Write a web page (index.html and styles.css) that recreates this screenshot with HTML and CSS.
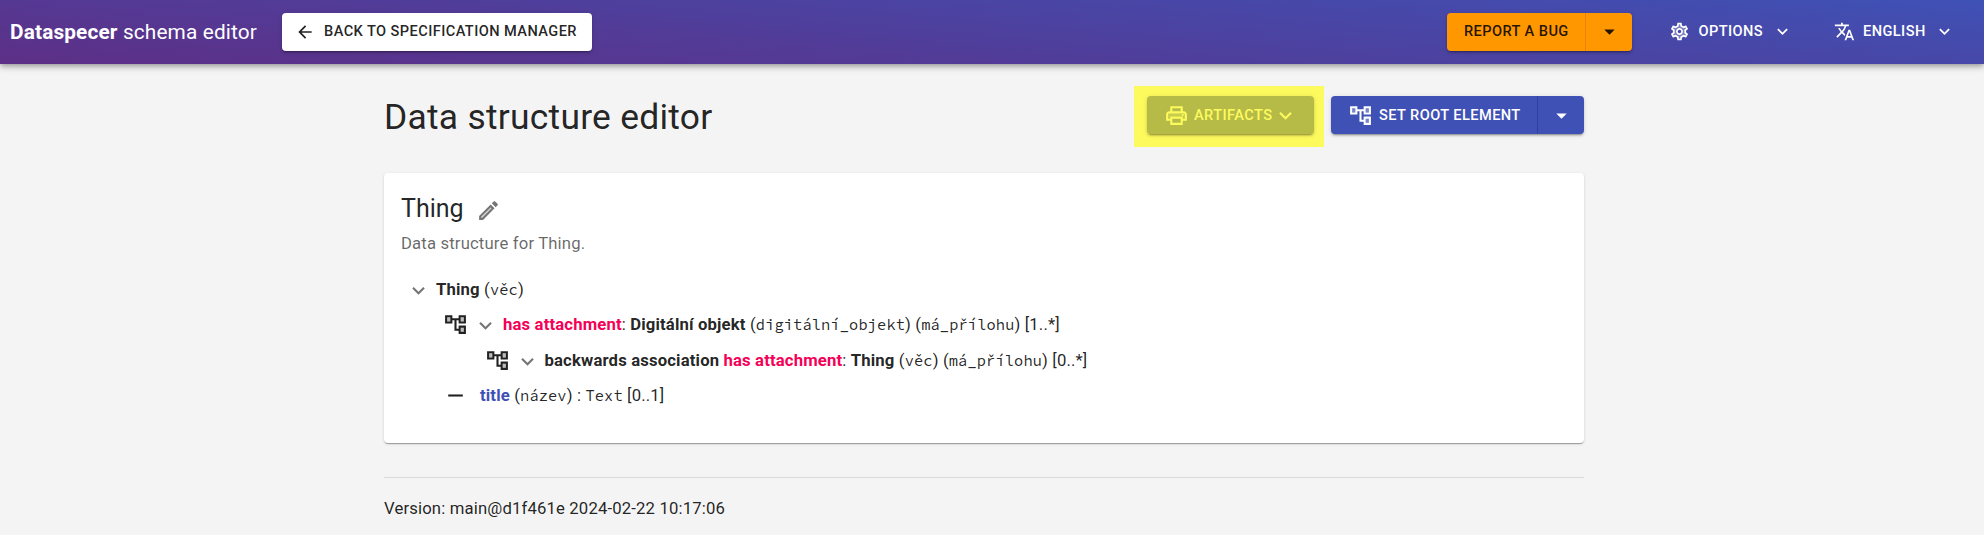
FILE: index.html
```html
<!DOCTYPE html>
<html lang="en">
<head>
<meta charset="utf-8">
<title>Dataspecer schema editor</title>
<link rel="stylesheet" href="styles.css">
</head>
<body>
<svg class="sprite" aria-hidden="true">
  <symbol id="chevron" viewBox="0 0 24 24"><path d="M7.41 8.59 12 13.17l4.59-4.58L18 10l-6 6-6-6 1.41-1.41z"/></symbol>
  <symbol id="caret" viewBox="0 0 24 24"><path d="m7 10 5 5 5-5z"/></symbol>
  <symbol id="tree" viewBox="0 0 24 24"><path opacity=".3" d="M7 9H4V5h3v4zm10 6h3v4h-3v-4zm0-10h3v4h-3V5z"/><path d="M22 11V3h-7v3H9V3H2v8h7V8h2v10h4v3h7v-8h-7v3h-2V8h2v3h7zM7 9H4V5h3v4zm10 6h3v4h-3v-4zm0-10h3v4h-3V5z"/></symbol>
  <symbol id="print" viewBox="0 0 24 24"><path opacity=".3" d="M19 10H5c-.55 0-1 .45-1 1v4h2v-2h12v2h2v-4c0-.55-.45-1-1-1z"/><path d="M19 8h-1V3H6v5H5c-1.66 0-3 1.34-3 3v6h4v4h12v-4h4v-6c0-1.66-1.34-3-3-3zM8 5h8v3H8V5zm8 14H8v-4h8v4zm4-4h-2v-2H6v2H4v-4c0-.55.45-1 1-1h14c.55 0 1 .45 1 1v4z"/><circle cx="18" cy="11.5" r="1"/></symbol>
  <symbol id="edit" viewBox="0 0 24 24"><path opacity=".3" d="M5 18.08V19h.92l9.06-9.06-.92-.92z"/><path d="M20.71 7.04c.39-.39.39-1.02 0-1.41l-2.34-2.34c-.2-.2-.45-.29-.71-.29s-.51.1-.7.29l-1.83 1.83 3.75 3.75 1.83-1.83zM3 17.25V21h3.75L17.81 9.94l-3.75-3.75L3 17.25zM5.92 19H5v-.92l9.06-9.06.92.92L5.92 19z"/></symbol>
  <symbol id="back" viewBox="0 0 24 24"><path d="M20 11H7.83l5.59-5.59L12 4l-8 8 8 8 1.41-1.41L7.83 13H20v-2z"/></symbol>
  <symbol id="minus" viewBox="0 0 24 24"><path d="M19 13H5v-2h14v2z"/></symbol>
  <symbol id="translate" viewBox="0 0 24 24"><path d="m12.87 15.07-2.54-2.51.03-.03c1.74-1.94 2.98-4.17 3.71-6.53H17V4h-7V2H8v2H1v1.99h11.17C11.5 7.92 10.44 9.75 9 11.35 8.07 10.32 7.3 9.19 6.69 8h-2c.73 1.63 1.73 3.17 2.98 4.56l-5.09 5.02L4 19l5-5 3.11 3.11.76-2.04zM18.5 10h-2L12 22h2l1.12-3h4.75L21 22h2l-4.5-12zm-2.62 7 1.62-4.33L19.12 17h-3.24z"/></symbol>
  <symbol id="gear" viewBox="0 0 24 24"><path opacity=".3" d="M19.28 8.6l-.7-1.21-1.27.51-1.06.43-.91-.7c-.39-.3-.8-.54-1.23-.71l-1.06-.43-.16-1.13L12.7 4h-1.4l-.19 1.35-.16 1.13-1.06.44c-.41.17-.82.41-1.25.73l-.9.68-1.05-.42-1.27-.52-.7 1.21 1.08.84.89.7-.14 1.13c-.03.3-.05.53-.05.73s.02.43.05.73l.14 1.13-.89.7-1.08.84.7 1.21 1.27-.51 1.06-.43.91.7c.39.3.8.54 1.23.71l1.06.43.16 1.13.19 1.36h1.39l.19-1.35.16-1.13 1.06-.43c.41-.17.82-.41 1.25-.73l.9-.68 1.04.42 1.27.51.7-1.21-1.08-.84-.89-.7.14-1.13c.04-.31.05-.52.05-.73s-.02-.43-.05-.73l-.14-1.13.89-.7 1.1-.84zM12 16c-2.21 0-4-1.79-4-4s1.79-4 4-4 4 1.79 4 4-1.79 4-4 4z"/><path d="M19.43 12.98c.04-.32.07-.64.07-.98 0-.34-.03-.66-.07-.98l2.11-1.65c.19-.15.24-.42.12-.64l-2-3.46c-.09-.16-.26-.25-.44-.25-.06 0-.12.01-.17.03l-2.49 1c-.52-.4-1.08-.73-1.69-.98l-.38-2.65C14.46 2.18 14.25 2 14 2h-4c-.25 0-.46.18-.49.42l-.38 2.65c-.61.25-1.17.59-1.69.98l-2.49-1c-.06-.02-.12-.03-.18-.03-.17 0-.34.09-.43.25l-2 3.46c-.13.22-.07.49.12.64l2.11 1.65c-.04.32-.07.65-.07.98 0 .33.03.66.07.98l-2.11 1.65c-.19.15-.24.42-.12.64l2 3.46c.09.16.26.25.44.25.06 0 .12-.01.17-.03l2.49-1c.52.4 1.08.73 1.69.98l.38 2.65c.03.24.24.42.49.42h4c.25 0 .46-.18.49-.42l.38-2.65c.61-.25 1.17-.59 1.69-.98l2.49 1c.06.02.12.03.18.03.17 0 .34-.09.43-.25l2-3.46c.12-.22.07-.49-.12-.64l-2.11-1.65zm-1.98-1.71c.04.31.05.52.05.73 0 .21-.02.43-.05.73l-.14 1.13.89.7 1.08.84-.7 1.21-1.27-.51-1.04-.42-.9.68c-.43.32-.84.56-1.25.73l-1.06.43-.16 1.13-.2 1.35h-1.4l-.19-1.35-.16-1.13-1.06-.43c-.43-.18-.83-.41-1.23-.71l-.91-.7-1.06.43-1.27.51-.7-1.21 1.08-.84.89-.7-.14-1.13c-.03-.31-.05-.54-.05-.74s.02-.43.05-.73l.14-1.13-.89-.7-1.08-.84.7-1.21 1.27.51 1.04.42.9-.68c.43-.32.84-.56 1.25-.73l1.06-.43.16-1.13.2-1.35h1.39l.19 1.35.16 1.13 1.06.43c.43.18.83.41 1.23.71l.91.7 1.06-.43 1.27-.51.7 1.21-1.07.85-.89.7.14 1.13zM12 8c-2.21 0-4 1.79-4 4s1.79 4 4 4 4-1.79 4-4-1.79-4-4-4zm0 6c-1.1 0-2-.9-2-2s.9-2 2-2 2 .9 2 2-.9 2-2 2z"/></symbol>
</svg>

<header class="appbar">
  <div class="brand"><strong>Dataspecer</strong> schema editor</div>
  <button class="btn btn-back"><svg class="icon small"><use href="#back"/></svg>Back to specification manager</button>
  <div class="spacer"></div>
  <div class="group group-bug">
    <button class="btn bug-main">Report a bug</button>
    <button class="btn bug-more"><svg class="icon large"><use href="#caret"/></svg></button>
  </div>
  <button class="btn btn-text options"><svg class="icon medium"><use href="#gear"/></svg><span>Options</span><svg class="icon chevron"><use href="#chevron"/></svg></button>
  <button class="btn btn-text language"><svg class="icon medium"><use href="#translate"/></svg><span>English</span><svg class="icon chevron"><use href="#chevron"/></svg></button>
</header>

<main class="container">
  <div class="titlebar">
    <h1>Data structure editor</h1>
    <div class="highlight">
      <button class="btn artifacts"><svg class="icon large"><use href="#print"/></svg><span>Artifacts</span><svg class="icon large"><use href="#chevron"/></svg></button>
    </div>
    <div class="group group-root">
      <button class="btn root-main"><svg class="icon large"><use href="#tree"/></svg>Set root element</button>
      <button class="btn root-more"><svg class="icon large"><use href="#caret"/></svg></button>
    </div>
  </div>

  <section class="card">
    <div class="card-title"><h2>Thing</h2><svg class="icon edit"><use href="#edit"/></svg></div>
    <p class="description">Data structure for Thing.</p>
    <ul class="tree">
      <li class="row level0"><svg class="icon large toggle"><use href="#chevron"/></svg><span><b>Thing</b> (<code>věc</code>)</span></li>
      <li class="row level1"><svg class="icon large"><use href="#tree"/></svg><svg class="icon large toggle"><use href="#chevron"/></svg><span><b class="association">has attachment</b>: <b>Digitální objekt</b> (<code>digitální_objekt</code>) (<code>má_přílohu</code>) [1..*]</span></li>
      <li class="row level2"><svg class="icon large"><use href="#tree"/></svg><svg class="icon large toggle"><use href="#chevron"/></svg><span><b>backwards association <span class="association">has attachment</span></b>: <b>Thing</b> (<code>věc</code>) (<code>má_přílohu</code>) [0..*]</span></li>
      <li class="row level1 leaf"><svg class="icon large"><use href="#minus"/></svg><span><b class="attribute">title</b> (<code>název</code>) : <code>Text</code> [0..1]</span></li>
    </ul>
  </section>
  <footer class="footer">Version: main@d1f461e 2024-02-22 10:17:06</footer>
</main>
</body>
</html>
```
FILE: styles.css
```css
* { box-sizing: border-box; }
body {
  margin: 0;
  min-height: 535px;
  background: #f4f4f4;
  color: rgba(0, 0, 0, .87);
  font: 400 16.7px/25px Roboto, "Noto Sans", sans-serif;
  letter-spacing: .15px;
}
.sprite { display: none; }
.icon { fill: currentColor; flex: none; display: block; }
.small { width: 20px; height: 20px; }
.medium { width: 21px; height: 21px; }
.large { width: 25px; height: 25px; }
.chevron { width: 21px; height: 21px; }

.appbar {
  display: flex;
  align-items: flex-start;
  height: 64px;
  padding: 12.5px 26px 0 10px;
  color: #fff;
  background: linear-gradient(5deg, #5d2f86 0%, #3f51b5 100%);
  box-shadow: 0 2px 4px -1px rgba(0,0,0,.2), 0 4px 5px rgba(0,0,0,.14), 0 1px 10px rgba(0,0,0,.12);
}
.brand { width: 272px; font-size: 20.8px; line-height: 38px; white-space: nowrap; }
.brand strong { font-weight: 700; }
.spacer { flex: 1; }
.btn {
  display: flex;
  align-items: center;
  height: 38px;
  padding: 0;
  border: 0;
  border-radius: 4px;
  background: none;
  color: inherit;
  font: 500 14.6px/25px Roboto, sans-serif;
  letter-spacing: .42px;
  text-align: left;
  text-transform: uppercase;
  white-space: nowrap;
}
.btn-back, .artifacts, .group {
  box-shadow: 0 3px 1px -2px rgba(0,0,0,.2), 0 2px 2px rgba(0,0,0,.14), 0 1px 5px rgba(0,0,0,.12);
}
.btn-back { width: 310px; padding-left: 13px; gap: 9px; background: #fff; color: rgba(0,0,0,.87); }
.group { display: flex; flex: none; border-radius: 4px; overflow: hidden; }
.group .btn { border-radius: 0; }
.group-bug { width: 185px; background: #ff9800; color: rgba(0,0,0,.87); }
.group .bug-main { width: 139px; padding-left: 17px; border-right: 1px solid #e98208; }
.bug-more { flex: 1; justify-content: center; }
.options { margin-left: 37px; width: 165px; }
.options .medium { margin-right: 8.5px; }
.options span { width: 73px; }
.language { width: 124px; }
.language .medium { margin-right: 8px; }
.language span { width: 71px; }

.container { width: 1200px; margin-left: 384px; }
.titlebar { display: flex; align-items: flex-start; padding-top: 23px; height: 109px; }
h1 { flex: 1; margin: 7px 0 0; font-size: 35.4px; line-height: 46px; font-weight: 400; letter-spacing: .26px; }
.highlight { width: 190px; height: 61px; margin-top: -1px; padding: 10px 10px 0 13px; background: #fdfa5e; }
.artifacts { width: 167px; padding-left: 17px; background: #b5bb46; color: #fdfa5e; }
.artifacts span { width: 79px; margin-left: 5px; }
.group-root { width: 253px; margin: 9px 0 0 7px; background: #3f51b5; color: #fff; }
.group .root-main { width: 207px; padding-left: 17px; gap: 6px; border-right: 1px solid #303f9f; }
.root-more { flex: 1; justify-content: center; }

.card {
  height: 270px;
  padding: 17px 17px;
  border-radius: 4px;
  background: #fff;
  box-shadow: 0 2px 1px -1px rgba(0,0,0,.2), 0 1px 1px rgba(0,0,0,.14), 0 1px 3px rgba(0,0,0,.12);
}
.card-title { display: flex; height: 38px; gap: 12px; }
h2 { margin: 0; font-size: 25px; line-height: 38px; font-weight: 400; letter-spacing: 0; }
.edit { width: 25px; height: 25px; margin-top: 8px; color: rgba(0,0,0,.54); }
.description { margin: 3px 0 16px; color: rgba(0,0,0,.6); }
.tree { list-style: none; margin: 0; padding: 0; }
.row { display: flex; align-items: center; height: 35.3px; white-space: nowrap; gap: 5px; }
.level0 { padding-left: 5px; }
.level1 { padding-left: 42px; }
.level2 { padding-left: 83.5px; }
.leaf { gap: 12px; }
.toggle { position: relative; top: 1px; color: rgba(0,0,0,.54); }
b { font-weight: 700; }
code { font-family: "Source Code Pro", "Noto Sans Mono", monospace; font-size: 15.3px; line-height: 20px; }
.association { color: #f50057; }
.attribute { color: #3f51b5; }
.footer { margin-top: 34px; padding-top: 18px; border-top: 1px solid #dadada; }
```
